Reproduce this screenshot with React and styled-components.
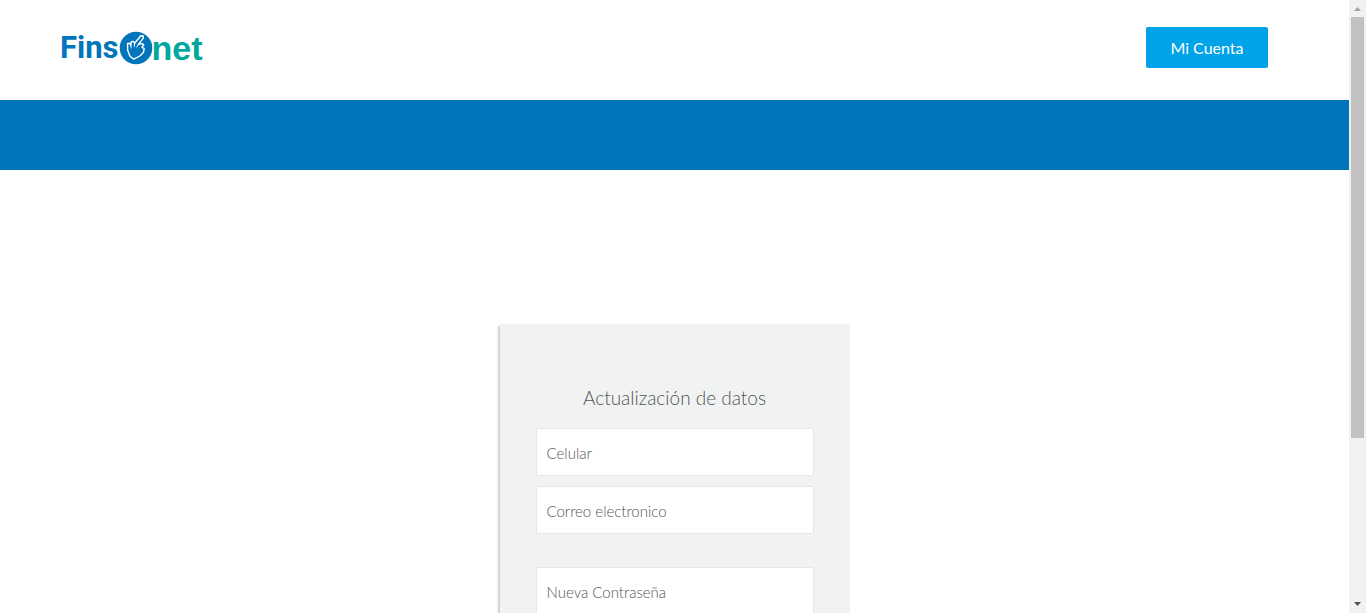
import React from "react";
import styled, { createGlobalStyle } from "styled-components";

const GlobalStyle = createGlobalStyle`
  *, *::before, *::after { box-sizing: border-box; }
  body {
    margin: 0;
    background: #fff;
    color: #555;
    font-family: Lato, "Open Sans", sans-serif;
  }
`;

const Frame = styled.div`
  display: flex;
  height: 100vh;
`;

const Page = styled.div`
  flex: 1;
  min-width: 0;
  overflow-y: auto;
  scrollbar-width: none;
`;

const Header = styled.header`
  display: flex;
  align-items: center;
  justify-content: space-between;
  height: 100px;
  padding: 0 81px 5px 60px;
`;

const Logo = styled.a`
  display: flex;
  align-items: center;
  text-decoration: none;
  line-height: 36px;
`;

const LogoFins = styled.span`
  color: #0075bc;
  font: 700 31px/36px Roboto, sans-serif;
`;

const LogoNet = styled.span`
  color: #00a99d;
  font: 700 34px/36px "Liberation Sans", Arial, sans-serif;
`;

const LogoMark = styled.svg`
  display: block;
  width: 34px;
  height: 34px;
  margin-right: -1px;
`;

const AccountButton = styled.button`
  width: 122px;
  height: 41px;
  border: 0;
  border-radius: 2px;
  background: #00a2e8;
  color: #fff;
  font: 400 16px/24px Lato, sans-serif;
  cursor: pointer;
`;

const Banner = styled.div`
  height: 70px;
  background: #0075bc;
`;

const Main = styled.main`
  display: flex;
  justify-content: center;
  padding: 154px 16px 40px;
`;

const Card = styled.form`
  display: flex;
  flex-direction: column;
  gap: 10px;
  width: 350px;
  padding: 60px 36px 100px;
  background: #f0f3f2;
  box-shadow: -2px 2px 2px rgba(0, 0, 0, 0.2);
`;

const Title = styled.h1`
  margin: 0 0 6px;
  text-align: center;
  font-size: 19px;
  line-height: 28px;
  font-weight: 300;
`;

const Fields = styled.div`
  display: flex;
  flex-direction: column;
  gap: 10px;
  margin-bottom: 23px;
`;

const Field = styled.input`
  width: 100%;
  height: 48px;
  padding: 2px 10px 0;
  border: 1px solid #e5e7e7;
  border-radius: 2px;
  background: #fff;
  color: #555;
  font: 300 15px/20px Lato, sans-serif;

  &::placeholder {
    color: #555;
    opacity: 1;
  }
`;

const Scrollbar = styled.div`
  display: flex;
  flex-direction: column;
  align-items: center;
  width: 17px;
  background: #f1f1f1;
`;

const Track = styled.div`
  flex: 1;
  width: 13px;
`;

const Thumb = styled.div`
  height: 72.7%;
  background: #c1c1c1;
`;

const Arrow = styled.svg`
  display: block;
  width: 17px;
  height: 17px;
  fill: ${(p) => p.$color};
`;

export default function App() {
  return (
    <>
      <GlobalStyle />
      <Frame>
        <Page>
          <Header>
            <Logo href="#">
              <LogoFins>Fins</LogoFins>
              <LogoMark viewBox="0 0 34 34" aria-hidden="true">
                <circle cx="17" cy="17" r="16.3" fill="#0075bc" />
                <path
                  d="M11 25.200 8.600 19 8.600 12.500 10.500 12.200 11.800 14.200 12.400 10.600 14.400 10.400 15.600 12.200 21.800 4.800 24.200 5 24.200 7.400 19.400 13.400 23.200 12.600 24.800 14 22.800 16.200 25.200 17.600 24.400 21.600 20.800 25 14.800 28.200Z"
                  fill="none"
                  stroke="#fff"
                  strokeWidth="1.4"
                  strokeLinejoin="round"
                />
                <path
                  d="M11.800 14.200 12.200 17M15.600 12.200 15.400 15.400M19.400 13.400 17.800 16"
                  fill="none"
                  stroke="#fff"
                  strokeWidth="1"
                  strokeLinecap="round"
                />
              </LogoMark>
              <LogoNet>net</LogoNet>
            </Logo>
            <AccountButton type="button">Mi Cuenta</AccountButton>
          </Header>
          <Banner />
          <Main>
            <Card>
              <Title>Actualización de datos</Title>
              <Fields>
                <Field type="tel" placeholder="Celular" aria-label="Celular" />
                <Field
                  type="email"
                  placeholder="Correo electronico"
                  aria-label="Correo electronico"
                />
              </Fields>
              <Field
                type="password"
                placeholder="Nueva Contraseña"
                aria-label="Nueva Contraseña"
              />
            </Card>
          </Main>
        </Page>
        <Scrollbar aria-hidden="true">
          <Arrow viewBox="0 0 17 17" $color="#a3a3a3">
            <path d="M5 11h7L8.500 7Z" />
          </Arrow>
          <Track>
            <Thumb />
          </Track>
          <Arrow viewBox="0 0 17 17" $color="#505050">
            <path d="M5 6h7L8.500 10Z" />
          </Arrow>
        </Scrollbar>
      </Frame>
    </>
  );
}
